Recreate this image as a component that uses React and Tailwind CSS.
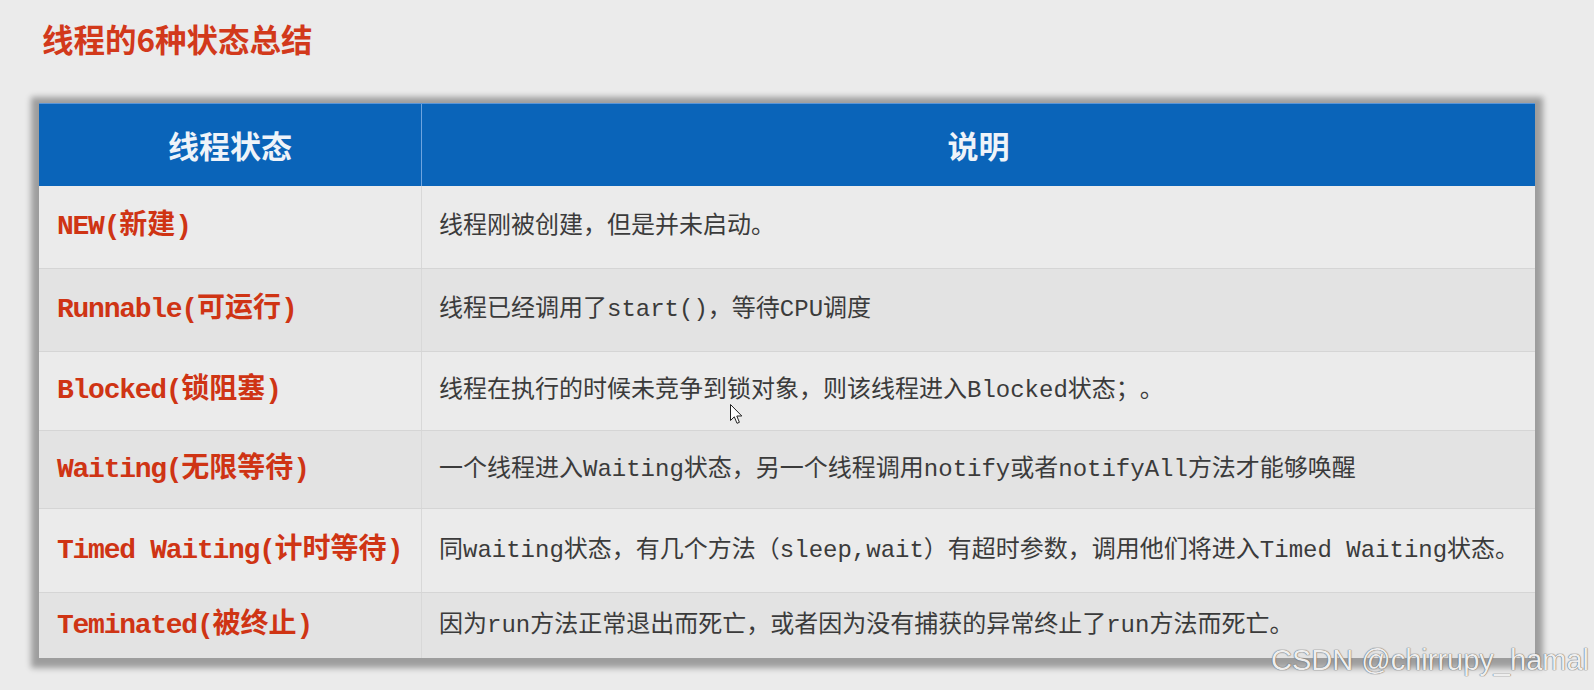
import React from 'react';

const rows = [
  { state: 'NEW(新建)', desc: '线程刚被创建，但是并未启动。', h: 'h-[82px]', bg: 'bg-[#ebebeb]' },
  { state: 'Runnable(可运行)', desc: '线程已经调用了start()，等待CPU调度', h: 'h-[83px]', bg: 'bg-[#e3e3e3]' },
  { state: 'Blocked(锁阻塞)', desc: '线程在执行的时候未竞争到锁对象，则该线程进入Blocked状态\uFF1B\u3002', h: 'h-[79px]', bg: 'bg-[#ebebeb]' },
  { state: 'Waiting(无限等待)', desc: '一个线程进入Waiting状态，另一个线程调用notify或者notifyAll方法才能够唤醒', h: 'h-[78px]', bg: 'bg-[#e3e3e3]' },
  { state: 'Timed Waiting(计时等待)', desc: '同waiting状态，有几个方法（sleep,wait）有超时参数，调用他们将进入Timed Waiting状态。', h: 'h-[84px]', bg: 'bg-[#ebebeb]' },
  { state: 'Teminated(被终止)', desc: '因为run方法正常退出而死亡，或者因为没有捕获的异常终止了run方法而死亡。', h: 'h-[66px]', bg: 'bg-[#e3e3e3]' },
];

// wrap the latin runs so they can be narrowed to match the slide's mono face
function Mixed({ text, latin }) {
  return text.split(/([\x20-\x7e]+)/).map((part, i) =>
    /^[\x20-\x7e]+$/.test(part)
      ? <span key={i} className={latin}>{part}</span>
      : part
  );
}

function Cursor() {
  return (
    <svg className="absolute left-[730px] top-[404px]" width="14" height="21" viewBox="0 0 14 21">
      <path d="M0.5 0.5 L0.5 16.5 L4.3 12.8 L7 19.3 L9.4 18.3 L6.8 12 L11.8 12 Z" fill="#fff" stroke="#222" strokeWidth="1" strokeLinejoin="round" />
    </svg>
  );
}

export default function App() {
  return (
    <div className="relative w-[1594px] h-[690px] overflow-hidden bg-[#ebebeb] font-['Noto_Sans_CJK_SC',sans-serif]">
      {/* Title */}
      <div className="pl-[42px] pt-[23px]">
        <h1 className="text-[31.5px] leading-none font-bold text-[#d2391b]">线程的6种状态总结</h1>
      </div>

      {/* Table */}
      <div className="ml-[39px] mt-[48.5px] w-[1496px] shadow-[0_2px_6px_8px_rgba(0,0,0,0.33)]">
        <div className="flex h-[83px] bg-[#0a64b9] border-t border-[#5a95d8] text-[31px] font-bold text-[#eef3f9]">
          <div className="w-[383px] flex items-center justify-center border-r border-[#6ea4df]">线程状态</div>
          <div className="flex-1 flex items-center justify-center">说明</div>
        </div>

        {rows.map((r, i) => (
          <div key={r.state} className={`flex ${r.h} ${r.bg} ${i > 0 ? 'border-t border-[#d5d5d5]' : ''}`}>
            <div className="w-[383px] flex items-center pl-[18px] border-r border-[#d8d8d8] text-[28px] font-bold text-[#cf3414] font-['Liberation_Mono','Noto_Sans_CJK_SC',monospace]">
              <span><Mixed text={r.state} latin="tracking-[-0.045em]" /></span>
            </div>
            <div className="flex-1 flex items-center pl-[17px] text-[24px] text-[#3b3b3b] font-['Liberation_Mono','Noto_Sans_CJK_SC',monospace] whitespace-nowrap [text-spacing-trim:space-all]">
              <span><Mixed text={r.desc} latin="" /></span>
            </div>
          </div>
        ))}
      </div>

      <Cursor />

      {/* watermark */}
      <div className="absolute right-[5px] top-[646px] text-[29px] leading-none text-white/90 font-['Liberation_Sans',sans-serif] [text-shadow:0_0_1px_#555,0_0_1px_#555]">
        CSDN @chirrupy_hamal
      </div>
    </div>
  );
}
